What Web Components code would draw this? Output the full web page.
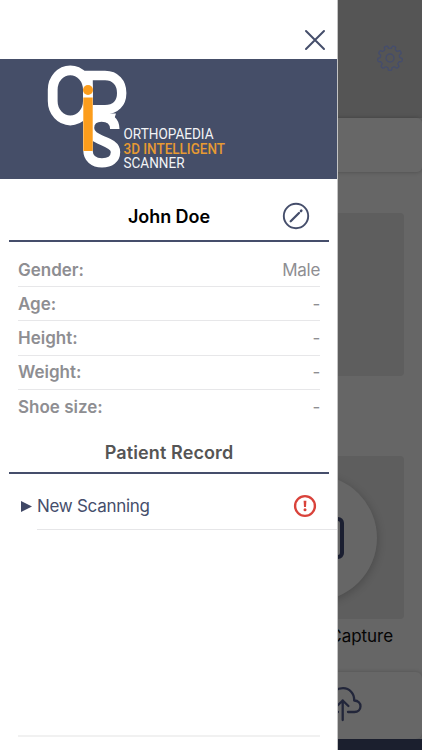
<!DOCTYPE html>
<html lang="en">
<head>
<meta charset="utf-8">
<title>Patient drawer</title>
<style>
html,body{margin:0;height:750px;overflow:hidden;background:#666}
body{font-family:Inter,"Liberation Sans",sans-serif;position:relative;width:422px}
side-drawer{position:absolute;left:0;top:0}
</style>
</head>
<body>
<scan-screen></scan-screen>
<side-drawer>
  <brand-banner></brand-banner>
  <patient-name>John Doe</patient-name>
  <info-list>
    <info-row label="Gender:">Male</info-row>
    <info-row label="Age:">-</info-row>
    <info-row label="Height:">-</info-row>
    <info-row label="Weight:">-</info-row>
    <info-row label="Shoe size:">-</info-row>
  </info-list>
  <record-heading>Patient Record</record-heading>
  <record-item>New Scanning</record-item>
</side-drawer>
<script>
function element(name, markup) {
  customElements.define(name, class extends HTMLElement {
    constructor() {
      super();
      this.attachShadow({mode: 'open'}).innerHTML = '<style>:host,*{box-sizing:border-box}svg{display:block}</style>' + markup;
    }
    connectedCallback() {
      const label = this.shadowRoot.querySelector('.label');
      if (label) label.textContent = this.getAttribute('label');
    }
  });
}

element('gear-icon', `<style>:host{display:block}</style>
<svg width="28" height="28" viewBox="0 0 28 28" fill="none" stroke="#454d6c" stroke-width="1.300" stroke-linejoin="round">
<path id="g"/><circle cx="14" cy="14" r="4"/></svg>`);

element('upload-icon', `<style>:host{display:block}</style>
<svg width="42" height="36" viewBox="0 0 42 36" fill="none" stroke="#22263a" stroke-width="2.3" stroke-linecap="round" stroke-linejoin="round">
<path d="M16 25h-6a7 7 0 0 1-1-14c1-6 6-9.800 12-9.800 6.500 0 11.500 5.200 11.200 12.300 4 .2 6.300 2.800 6.300 5.700 0 3.300-2.500 5.800-6.200 5.800H26M20.700 33V13.500M15 19l5.700-5.500 5.700 5.500"/></svg>`);

element('scan-screen', `<style>
:host{display:flex;flex-direction:column;width:422px;height:750px;background:#666;overflow:hidden}
header{height:118px;background:#555;display:flex;justify-content:flex-end;padding:44px 18px 0 0}
.bar{height:54px;background:#676767;border-radius:0 5px 5px 0;box-shadow:0 0 4px #0004;flex:none}
main{flex:1;padding:41px 18px 0;display:flex;flex-direction:column}
.card{height:163px;background:#5e5e5e;border-radius:4px;flex:none}
.card+.card{margin-top:80px;display:flex;justify-content:flex-end;align-items:center;padding-right:27px}
.disc{width:126px;height:126px;border-radius:50%;background:#666;box-shadow:1px 2px 8px #0003;display:grid;place-items:center}
.frame{width:59px;height:42px;border:4.500px solid #1b1f31;border-radius:6px}
.cap{text-align:right;font-size:17px;line-height:22px;padding:6px 11px 0 0;color:#050505;letter-spacing:-.05px}
footer{height:67px;flex:none;background:#676767;border-radius:0 6px 6px 0;box-shadow:0 0 4px #0003;display:flex;justify-content:flex-end;padding:15px 58px 0 0}
.base{height:11px;background:#1b1f2e;flex:none}
</style>
<header><gear-icon></gear-icon></header><div class="bar"></div>
<main><div class="card"></div><div class="card"><div class="disc"><div class="frame"></div></div></div><div class="cap">Capture</div></main>
<footer><upload-icon></upload-icon></footer><div class="base"></div>`);

element('side-drawer', `<style>
:host{display:flex;flex-direction:column;width:338px;height:750px;background:#fff;overflow:hidden;border-right:1px solid #c4c4c4}
.top{height:59px;flex:none;display:flex;justify-content:flex-end;padding:29px 11px 0 0}
.end{margin:auto 17px 13px 18px;height:2px;background:#f1f1f1}
</style>
<div class="top"><svg width="22" height="22" viewBox="0 0 22 22"><path d="M2 2l18 18M20 2L2 20" stroke="#454e6b" stroke-width="2" stroke-linecap="round"/></svg></div>
<slot></slot><div class="end"></div>`);

element('brand-banner', `<style>:host{display:block;height:120px;flex:none;background:#454e68}svg text{font-family:Roboto,sans-serif}</style>
<svg width="337" height="120" viewBox="0 59 337 120">
<g fill="none" stroke="#fff" stroke-width="9.800">
<rect x="52.700" y="70.300" width="35.200" height="50.200" rx="17.600" ry="19.500"/>
<path d="M83 75.500h22c10.500 0 16.700 7.400 16.700 17.400s-6.200 16.700-16.700 16.700H92" stroke-width="9.400"/>
<path d="M114.800 129c0-8-5.500-12-13.300-12-7.300 0-12 4-12 11 0 14 26 11.500 26 24 0 7-5.500 10.900-13.500 10.900-8.300 0-14-4.900-14-12.400" stroke-width="9.400"/>
</g>
<path d="M96 113.500h20l-1.500 4.500-10-3z" fill="#fff"/>
<rect x="83" y="71" width="9.800" height="80" fill="#fff"/>
<g fill="#fc9d1c"><circle cx="88" cy="90" r="5"/><rect x="83.300" y="97.500" width="9.400" height="53.500"/></g>
<g font-size="14"><text x="123.500" y="139" fill="#f3f4f6" textLength="90" lengthAdjust="spacingAndGlyphs">ORTHOPAEDIA</text>
<text x="123.500" y="153.500" fill="#e79a32" font-weight="500" textLength="101.500" lengthAdjust="spacingAndGlyphs">3D INTELLIGENT</text>
<text x="123.500" y="168" fill="#f3f4f6" textLength="61" lengthAdjust="spacingAndGlyphs">SCANNER</text></g>
</svg>`);

element('patient-name', `<style>
:host{display:grid;grid-template-columns:1fr auto 1fr;align-items:center;height:63px;flex:none;margin:0 8px 0 9px;padding-top:13px;border-bottom:2px solid #454e6b;color:#000;font-weight:600;font-size:18px;letter-spacing:-.05px}
.name{grid-column:2}svg{justify-self:end;margin-right:19px}
</style><span class="name"><slot></slot></span>
<svg width="28" height="28" viewBox="0 0 28 28" fill="none" stroke="#454e6b"><circle cx="14" cy="14" r="12.200" stroke-width="1.900"/><path d="M8.700 19.300L17 11" stroke-width="2.300" stroke-linecap="round"/><path d="M19 9l.3-.3" stroke-width="2.600" stroke-linecap="round"/></svg>`);

element('info-list', `<style>:host{display:flex;flex-direction:column;flex:none;margin:11px 17px 0 18px}</style><slot></slot>`);

element('info-row', `<style>
:host{display:flex;justify-content:space-between;align-items:center;height:34.200px;border-bottom:1px solid #e7e7e9;font-size:17px;color:#8e8e92;line-height:22px}
:host(:last-child){border-bottom:0}
.label{font-weight:600}
.value{letter-spacing:-.3px}
</style><span class="label"></span><span class="value"><slot></slot></span>`);

element('record-heading', `<style>
:host{display:flex;justify-content:center;align-items:center;height:50px;flex:none;margin:0 8px 0 9px;padding-top:9px;border-bottom:2px solid #454e6b;color:#555;font-size:18px;font-weight:600;letter-spacing:.12px}
</style><div><slot></slot></div>`);

element('record-item', `<style>
:host{display:flex;flex:none;height:56px;padding-left:21px;align-items:stretch;color:#454e6b;font-size:17px;letter-spacing:-.28px}
.mark{width:16px;padding-top:27px}
.body{flex:1;display:flex;justify-content:space-between;align-items:center;padding:10px 20px 0 0;border-bottom:1px solid #e6e6e8}
</style><div class="mark"><svg width="12" height="11" viewBox="0 0 12 11"><path d="M0 0L11 5.500 0 11z" fill="#3f4765"/></svg></div>
<div class="body"><span><slot></slot></span>
<svg width="24" height="24" viewBox="0 0 24 24"><circle cx="12" cy="12" r="9.900" fill="none" stroke="#d9423a" stroke-width="2.400"/><path d="M10.600 6.800h2.800l-.4 6.200h-2z" fill="#d9423a"/><circle cx="12" cy="15.700" r="1.500" fill="#d9423a"/></svg></div>`);

// Gear outline: nine rounded teeth around the hub.
const gear = document.querySelector('scan-screen').shadowRoot.querySelector('gear-icon').shadowRoot.querySelector('path');
let d = '';
for (let i = 0; i < 90; i++) {
  const a = i / 90 * Math.PI * 2, r = 11 + 1.4 * Math.tanh(3 * Math.cos(a * 9 + Math.PI));
  d += (i ? 'L' : 'M') + (14 + r * Math.sin(a)).toFixed(2) + ' ' + (14 - r * Math.cos(a)).toFixed(2);
}
gear.setAttribute('d', d + 'Z');
</script>
</body>
</html>
